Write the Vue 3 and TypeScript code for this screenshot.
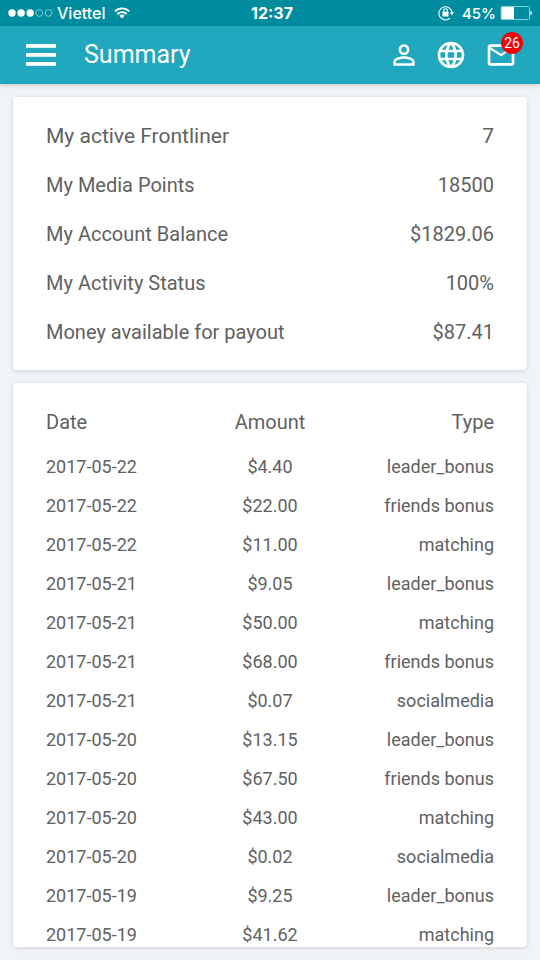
<script setup lang="ts">
interface SummaryItem {
  label: string
  value: string
}

interface Payment {
  date: string
  amount: string
  type: string
}

const summary: SummaryItem[] = [
  { label: 'My active Frontliner', value: '7' },
  { label: 'My Media Points', value: '18500' },
  { label: 'My Account Balance', value: '$1829.06' },
  { label: 'My Activity Status', value: '100%' },
  { label: 'Money available for payout', value: '$87.41' },
]

const payments: Payment[] = [
  { date: '2017-05-22', amount: '$4.40', type: 'leader_bonus' },
  { date: '2017-05-22', amount: '$22.00', type: 'friends bonus' },
  { date: '2017-05-22', amount: '$11.00', type: 'matching' },
  { date: '2017-05-21', amount: '$9.05', type: 'leader_bonus' },
  { date: '2017-05-21', amount: '$50.00', type: 'matching' },
  { date: '2017-05-21', amount: '$68.00', type: 'friends bonus' },
  { date: '2017-05-21', amount: '$0.07', type: 'socialmedia' },
  { date: '2017-05-20', amount: '$13.15', type: 'leader_bonus' },
  { date: '2017-05-20', amount: '$67.50', type: 'friends bonus' },
  { date: '2017-05-20', amount: '$43.00', type: 'matching' },
  { date: '2017-05-20', amount: '$0.02', type: 'socialmedia' },
  { date: '2017-05-19', amount: '$9.25', type: 'leader_bonus' },
  { date: '2017-05-19', amount: '$41.62', type: 'matching' },
]
</script>

<template>
  <div class="screen">
    <div class="status">
      <div class="status-side">
        <svg class="signal" width="45" height="10" viewBox="0 0 45 10" aria-hidden="true">
          <g fill="#fff">
            <circle cx="4" cy="5" r="3.7" />
            <circle cx="13.1" cy="5" r="3.7" />
            <circle cx="22.2" cy="5" r="3.7" />
          </g>
          <g fill="none" stroke="#7fd0da" stroke-width="0.9">
            <circle cx="31.3" cy="5" r="3.4" />
            <circle cx="40.4" cy="5" r="3.4" />
          </g>
        </svg>
        <span class="carrier">Viettel</span>
        <svg class="wifi" width="16" height="12" viewBox="0 0 16 12" aria-hidden="true">
          <g fill="none" stroke="#fff" stroke-width="1.9">
            <path d="M0.9 4.3a10 10 0 0 1 14.2 0" />
            <path d="M3.4 7a6.5 6.5 0 0 1 9.2 0" />
          </g>
          <path d="M8 11.6 5.3 8.8a3.9 3.9 0 0 1 5.4 0z" fill="#fff" />
        </svg>
      </div>
      <span class="clock">12:37</span>
      <div class="status-side end">
        <svg width="16" height="16" viewBox="0 0 16 16" aria-hidden="true">
          <path d="M12 13.2A6.6 6.6 0 1 1 14.1 8" fill="none" stroke="#fff" stroke-width="1.1" />
          <path d="M11.9 7.3H16l-2.1 2.9z" fill="#fff" />
          <rect x="4.5" y="6.8" width="6" height="4.7" rx="0.5" fill="#fff" />
          <path d="M5.7 7V5.6a1.8 1.8 0 0 1 3.6 0V7" fill="none" stroke="#fff" stroke-width="1.1" />
        </svg>
        <span class="percent">45%</span>
        <svg width="32" height="14" viewBox="0 0 32 14" aria-hidden="true">
          <rect x="1" y="0.5" width="28.4" height="13" rx="1" fill="none" stroke="#7fd0da" />
          <rect x="1.5" y="1" width="12.5" height="12" fill="#fff" />
          <path d="M30.3 4.5q1.7 .6 1.7 2.5t-1.7 2.5z" fill="#e4f7fa" />
        </svg>
      </div>
    </div>

    <header class="bar">
      <button class="icon-button" type="button" aria-label="Menu">
        <svg width="30" height="22" viewBox="0 0 30 22" fill="#fff" aria-hidden="true">
          <rect width="30" height="3.8" />
          <rect y="9" width="30" height="3.8" />
          <rect y="18" width="30" height="3.8" />
        </svg>
      </button>
      <h1>Summary</h1>
      <nav class="actions">
        <button class="icon-button" type="button" aria-label="Profile">
          <svg width="32" height="32" viewBox="0 0 24 24" fill="#fff" aria-hidden="true">
            <path d="M12 5.9a2.1 2.1 0 1 1 0 4.2 2.1 2.1 0 0 1 0-4.2m0 9c2.97 0 6.1 1.46 6.1 2.1v1.1H5.9V17c0-.64 3.13-2.1 6.1-2.1M12 4C9.79 4 8 5.79 8 8s1.79 4 4 4 4-1.79 4-4-1.79-4-4-4zm0 9c-2.67 0-8 1.34-8 4v3h16v-3c0-2.66-5.33-4-8-4z" />
          </svg>
        </button>
        <button class="icon-button" type="button" aria-label="Language">
          <svg width="32" height="32" viewBox="0 0 24 24" fill="#fff" aria-hidden="true">
            <path d="M11.99 2C6.47 2 2 6.48 2 12s4.47 10 9.99 10C17.52 22 22 17.52 22 12S17.52 2 11.99 2zm6.93 6h-2.95c-.32-1.25-.78-2.45-1.38-3.56 1.84.63 3.37 1.91 4.33 3.56zM12 4.04c.83 1.2 1.48 2.53 1.91 3.96h-3.82c.43-1.43 1.08-2.76 1.91-3.96zM4.26 14C4.1 13.36 4 12.69 4 12s.1-1.36.26-2h3.38c-.08.66-.14 1.32-.14 2s.06 1.34.14 2H4.26zm.82 2h2.95c.32 1.25.78 2.45 1.38 3.56-1.84-.63-3.37-1.9-4.33-3.56zm2.95-8H5.08c.96-1.66 2.49-2.93 4.33-3.56C8.81 5.55 8.35 6.75 8.03 8zM12 19.96c-.83-1.2-1.48-2.53-1.91-3.96h3.82c-.43 1.43-1.08 2.76-1.91 3.96zM14.34 14H9.66c-.09-.66-.16-1.32-.16-2s.07-1.35.16-2h4.68c.09.65.16 1.32.16 2s-.07 1.34-.16 2zm.25 5.56c.6-1.11 1.06-2.31 1.38-3.56h2.95c-.96 1.65-2.49 2.93-4.33 3.56zM16.36 14c.08-.66.14-1.32.14-2s-.06-1.34-.14-2h3.38c.16.64.26 1.31.26 2s-.1 1.36-.26 2h-3.38z" />
          </svg>
        </button>
        <button class="icon-button messages" type="button" aria-label="Messages">
          <svg width="32" height="32" viewBox="0 0 24 24" fill="#fff" aria-hidden="true">
            <path d="M20 4H4c-1.1 0-1.99.9-1.99 2L2 18c0 1.1.9 2 2 2h16c1.1 0 2-.9 2-2V6c0-1.1-.9-2-2-2zm0 14H4V8l8 5 8-5v10zm-8-7L4 6h16l-8 5z" />
          </svg>
          <span class="badge">26</span>
        </button>
      </nav>
    </header>

    <main class="content">
      <section class="card">
        <dl class="summary">
          <div v-for="item in summary" :key="item.label" class="summary-row">
            <dt>{{ item.label }}</dt>
            <dd>{{ item.value }}</dd>
          </div>
        </dl>
      </section>

      <section class="card payments">
        <table>
          <thead>
            <tr>
              <th scope="col">Date</th>
              <th scope="col">Amount</th>
              <th scope="col">Type</th>
            </tr>
          </thead>
          <tbody>
            <tr v-for="(payment, index) in payments" :key="index">
              <td>{{ payment.date }}</td>
              <td>{{ payment.amount }}</td>
              <td>{{ payment.type }}</td>
            </tr>
          </tbody>
        </table>
      </section>
    </main>
  </div>
</template>

<style>
body {
  background: #f1f4f7;
}
</style>

<style scoped>
.screen {
  display: flex;
  flex-direction: column;
  height: 100vh;
  color: #616161;
  font-family: Roboto, "Liberation Sans", sans-serif;
}

.status {
  display: grid;
  grid-template-columns: 1fr auto 1fr;
  align-items: center;
  height: 26px;
  flex: none;
  padding: 0 8px;
  background: #008c9f;
  color: #fff;
  font-family: Inter, "Liberation Sans", sans-serif;
  font-size: 16px;
  font-weight: 500;
}

.status-side {
  display: flex;
  align-items: center;
}

.carrier {
  margin: 0 8px 0 4px;
}

.clock {
  padding-left: 4px;
  font-weight: 700;
}

.end {
  justify-content: flex-end;
}

.percent {
  margin: 0 4px 0 8px;
  font-size: 15px;
}

.bar {
  display: flex;
  align-items: center;
  flex: none;
  height: 58px;
  padding: 0 23px 0 26px;
  background: #21a7be;
  box-shadow: 0 1px 5px rgba(0, 0, 0, 0.2);
  color: #fff;
}

.icon-button {
  position: relative;
  display: block;
  padding: 0;
  border: 0;
  background: none;
  font-family: inherit;
}

.icon-button svg {
  display: block;
}

h1 {
  margin: 0 0 0 28px;
  font-size: 25px;
  font-weight: 400;
  line-height: 32px;
}

.actions {
  display: flex;
  gap: 15px;
  margin-left: auto;
}

.messages {
  margin-left: 3px;
}

.badge {
  position: absolute;
  top: -7px;
  right: -6px;
  width: 22px;
  border-radius: 50%;
  background: #f40009;
  color: #fff;
  font-size: 14px;
  line-height: 22px;
  text-align: center;
}

.content {
  display: flex;
  flex: 1;
  flex-direction: column;
  gap: 13px;
  min-height: 0;
  padding: 13px;
}

.card {
  flex: none;
  padding: 0 33px;
  border-radius: 4px;
  background: #fff;
  box-shadow: 0 1px 5px rgba(0, 0, 0, 0.14);
}

.summary {
  margin: 0;
  padding: 14px 0 13px;
  font-size: 20px;
  line-height: 49px;
}

.summary-row {
  display: flex;
  justify-content: space-between;
}

.summary-row:first-child {
  font-size: 21px;
  line-height: 50px;
}

dd {
  margin: 0;
}

.payments {
  flex: 1;
  min-height: 0;
  overflow: hidden;
}

table {
  width: 100%;
  margin-top: 13px;
  border-collapse: collapse;
  table-layout: fixed;
  font-size: 18px;
}

th,
td {
  height: 39px;
  padding: 0;
  font-weight: 400;
  text-align: center;
}

th {
  height: 51px;
  font-size: 20px;
}

th:first-child,
td:first-child {
  text-align: left;
}

th:last-child,
td:last-child {
  text-align: right;
}
</style>
